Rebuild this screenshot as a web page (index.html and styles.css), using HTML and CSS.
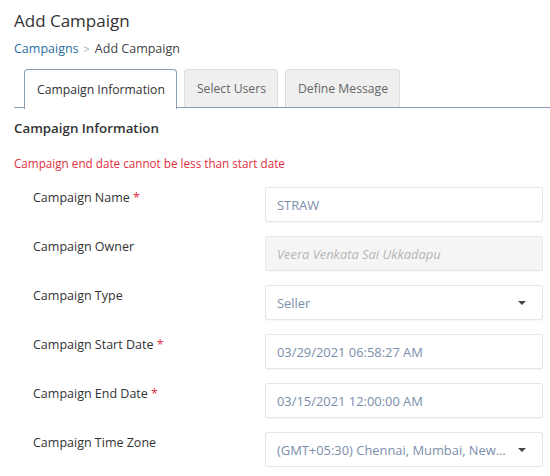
FILE: index.html
```html
<!DOCTYPE html>
<html>
<head>
<meta charset="utf-8">
<link rel="stylesheet" href="styles.css">
</head>
<body>
<div class="page">
  <h1 class="title">Add Campaign</h1>
  <div class="crumbs"><a class="crumb-link">Campaigns</a><span class="sep">&gt;</span><span class="crumb-cur">Add Campaign</span></div>
  <div class="tabs">
    <div class="tab active">Campaign Information</div>
    <div class="tab">Select Users</div>
    <div class="tab">Define Message</div>
  </div>
  <h2 class="section">Campaign Information</h2>
  <div class="error">Campaign end date cannot be less than start date</div>
  <div class="form">
    <div class="row">
      <div class="label">Campaign Name <span class="req">*</span></div>
      <div class="field">STRAW</div>
    </div>
    <div class="row">
      <div class="label">Campaign Owner</div>
      <div class="field disabled">Veera Venkata Sai Ukkadapu</div>
    </div>
    <div class="row">
      <div class="label">Campaign Type</div>
      <div class="field select"><span class="val">Seller</span><span class="caret"></span></div>
    </div>
    <div class="row">
      <div class="label">Campaign Start Date <span class="req">*</span></div>
      <div class="field">03/29/2021 06:58:27 AM</div>
    </div>
    <div class="row">
      <div class="label">Campaign End Date <span class="req">*</span></div>
      <div class="field">03/15/2021 12:00:00 AM</div>
    </div>
    <div class="row">
      <div class="label">Campaign Time Zone</div>
      <div class="field select"><span class="val">(GMT+05:30) Chennai, Mumbai, New…</span><span class="caret"></span></div>
    </div>
  </div>
</div>
</body>
</html>
```
FILE: styles.css
```css
* { box-sizing: border-box; }
html, body { margin: 0; padding: 0; background: #fff; }
body { font-family: "Open Sans", "Noto Sans", sans-serif; color: #333; }
.page { padding: 10px 0 0 14px; }
.title { margin: 0; font-size: 17px; font-weight: 400; line-height: 22px; color: #333; }
.crumbs { margin-top: 8px; font-size: 12.5px; line-height: 18px; display: flex; align-items: center; }
.crumb-link { color: #2a6fa0; }
.sep { color: #aaa; margin: 0 5px; font-size: 11px; }
.crumb-cur { color: #444; }
.tabs { margin-top: 9px; display: flex; gap: 7px; padding-left: 10px; border-bottom: 1.5px solid #8c9db3; height: 41px; align-items: flex-end; }
.tab { height: 38px; padding: 0 11px 0 12px; display: flex; align-items: center; font-size: 12.2px; color: #666; background: #efefef; border: 1px solid #dcdcdc; border-bottom: none; border-radius: 4px 4px 0 0; white-space: nowrap; }
.tab.active { background: #fff; color: #333; border-color: #8c9db3; height: 39.5px; margin-bottom: -1.5px; }
.section { margin: 10px 0 0; font-size: 13.3px; font-weight: 600; line-height: 20px; color: #333; }
.error { margin-top: 16px; font-size: 11.7px; line-height: 18px; color: #e0303f; }
.form { margin-top: 15px; display: flex; flex-direction: column; gap: 14px; padding-left: 19px; }
.row { display: flex; height: 35px; }
.label { width: 232px; font-size: 12.5px; color: #333; line-height: 20px; padding-top: 1px; white-space: nowrap; }
.req { color: #e0303f; }
.field { width: 278px; height: 35px; border: 1px solid #e6e6e6; border-radius: 2px; box-shadow: 0 1px 1px rgba(0,0,0,0.03); padding: 0 12px 0 11px; display: flex; align-items: center; font-size: 12.9px; color: #7b8eab; white-space: nowrap; overflow: hidden; }
.field.disabled { background: #f5f5f5; color: #b5b5b5; font-style: italic; }
.select { justify-content: space-between; }
.val { white-space: nowrap; flex: 1; min-width: 0; }
.caret { width: 0; height: 0; border-left: 4px solid transparent; border-right: 4px solid transparent; border-top: 4px solid #444; margin-left: 10px; margin-right: 4px; flex: none; }
```
